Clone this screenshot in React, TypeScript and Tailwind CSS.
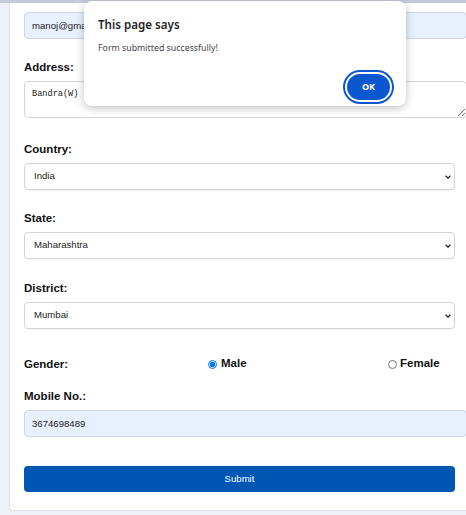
import { useState } from "react";

const LABEL = "h-4 leading-4 text-[11.5px] font-bold text-[#111]";
const INPUT =
    "block w-[443px] h-[27px] pl-[7px] rounded-[4px] border border-[#d0d7e2] bg-[#e8f0fe] text-[9.6px] text-[#222] outline-none";

function Select({ value }: { value: string }) {
    return (
        <div className="relative w-[431px] mt-[6px]">
            <select
                defaultValue={value}
                className="block w-full h-[27px] pl-[9px] pr-[16px] rounded-[4px] border border-[#d4d4d4] bg-white text-[9.6px] text-[#222] outline-none appearance-none shadow-[0_1px_1px_rgba(0,0,0,0.04)]"
            >
                <option>{value}</option>
            </select>
            <svg
                className="absolute right-[4px] top-1/2 -translate-y-1/2 pointer-events-none"
                width="6"
                height="4"
                viewBox="0 0 6 4"
            >
                <path d="M0.6 0.7 L3 3.1 L5.4 0.7" fill="none" stroke="#222" strokeWidth="1.3" />
            </svg>
        </div>
    );
}

export default function App() {
    const [gender, setGender] = useState("male");

    return (
        <div
            className="relative w-full min-h-[515px] overflow-hidden bg-[#eef2f8]"
            style={{ fontFamily: "'Liberation Sans', Arial, sans-serif" }}
        >
            {/* top strip */}
            <div className="h-[3px] bg-[#c5cad8]" />

            <div className="pl-[9px]">
                {/* CARD */}
                <div className="w-[470px] bg-white border border-t-0 border-[#dde1e7] rounded-b-[4px] pl-[14px] pt-[9px] pb-[18px]">

                    <input defaultValue="manoj@gmail.com" className={INPUT} />

                    <div className={`${LABEL} mt-[20px]`}>Address:</div>
                    <textarea
                        defaultValue="Bandra(W)"
                        className="block w-[443px] h-[37px] mt-[6px] pl-[7px] pt-[7px] rounded-[4px] border border-[#d4d4d4] bg-white text-[8.6px] leading-[11px] text-[#222] outline-none"
                        style={{ fontFamily: "'Liberation Mono', 'DejaVu Sans Mono', monospace" }}
                    />

                    <div className={`${LABEL} mt-[23px]`}>Country:</div>
                    <Select value="India" />

                    <div className={`${LABEL} mt-[20px]`}>State:</div>
                    <Select value="Maharashtra" />

                    <div className={`${LABEL} mt-[21px]`}>District:</div>
                    <Select value="Mumbai" />

                    {/* GENDER */}
                    <div className="flex items-center h-4 mt-[27px]">
                        <div className={`${LABEL} w-[184px]`}>Gender:</div>
                        <label className="flex items-center gap-[4px] w-[180px] text-[11.5px] font-bold text-[#111]">
                            <input
                                type="radio"
                                name="gender"
                                checked={gender === "male"}
                                onChange={() => setGender("male")}
                                className="m-0 w-[9px] h-[9px]"
                            />
                            Male
                        </label>
                        <label className="flex items-center gap-[3px] text-[11.5px] font-bold text-[#111]">
                            <input
                                type="radio"
                                name="gender"
                                checked={gender === "female"}
                                onChange={() => setGender("female")}
                                className="m-0 w-[9px] h-[9px]"
                            />
                            Female
                        </label>
                    </div>

                    <div className={`${LABEL} mt-[16px]`}>Mobile No.:</div>
                    <input defaultValue="3674698489" className={`${INPUT} mt-[6px]`} />

                    <button className="block w-[431px] h-[26px] mt-[29px] rounded-[4px] bg-[#0056b3] text-white text-[9.6px]">
                        Submit
                    </button>
                </div>
            </div>

            {/* ALERT DIALOG */}
            <div
                className="absolute left-[84px] top-[1px] w-[322px] h-[105px] rounded-[8px] bg-white shadow-[0_2px_8px_rgba(0,0,0,0.25)] pl-[14px] pt-[16px]"
                style={{ fontFamily: "'Noto Sans', 'Open Sans', sans-serif" }}
            >
                <div className="text-[11.6px] leading-[16px] font-semibold text-[#1f1f1f]">This page says</div>
                <div className="mt-[9px] text-[8.8px] leading-[13px] text-[#474747]">Form submitted successfully!</div>
                <div className="flex justify-end pr-[16px] mt-[19px]">
                    <button className="w-[43px] h-[26px] rounded-full bg-[#0b57d0] text-white text-[9px] font-bold ring-2 ring-[#0b57d0] ring-offset-2 ring-offset-white">
                        OK
                    </button>
                </div>
            </div>
        </div>
    );
}
